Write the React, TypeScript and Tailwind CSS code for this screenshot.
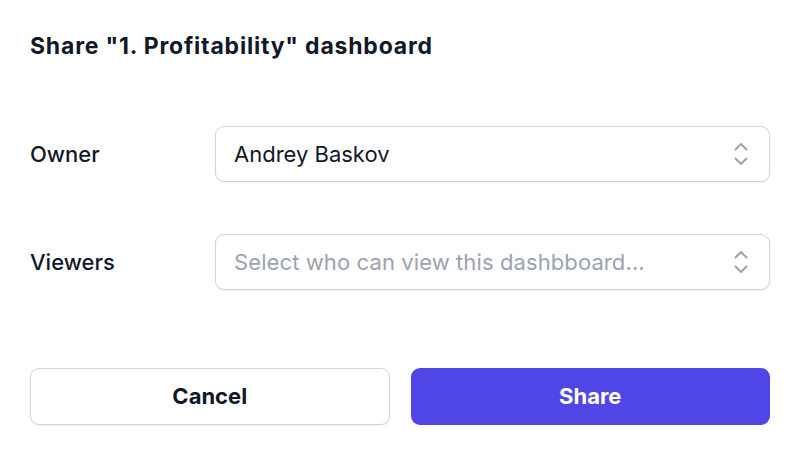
import React from "react";

function UpDown() {
  return (
    <svg width="16" height="26" viewBox="0 0 16 26" fill="none" stroke="#9ca3af" strokeWidth="2" strokeLinecap="round" strokeLinejoin="round">
      <path d="M2.5 8.5 L8 3 L13.5 8.5" />
      <path d="M2.5 17.5 L8 23 L13.5 17.5" />
    </svg>
  );
}

function Select({ value, placeholder }: { value?: string; placeholder?: string }) {
  return (
    <div className="flex h-[56px] items-center justify-between rounded-[9px] border border-[#d1d5db] bg-white pl-[18px] pr-[20px] shadow-[0_1px_2px_rgba(0,0,0,0.06)]">
      <span className={value ? "text-[22px] text-[#111827]" : "text-[22px] tracking-[0.1px] text-[#9ca3af]"}>
        {value ?? placeholder}
      </span>
      <UpDown />
    </div>
  );
}

export default function App() {
  return (
    <div
      className="min-h-[456px] w-[798px] bg-white pl-[30px] pr-[28px] pt-[32px]"
      style={{ fontFamily: "Inter, 'Liberation Sans', sans-serif" }}
    >
      <h1 className="text-[23px] font-bold leading-[28px] tracking-[0.8px] text-[#111827]">
        Share "1. Profitability" dashboard
      </h1>
      <div className="mt-[66px] grid grid-cols-[185px_1fr] items-center gap-y-[52px]">
        <div className="text-[22px] font-medium text-[#111827]">Owner</div>
        <Select value="Andrey Baskov" />
        <div className="text-[22px] font-medium text-[#111827]">Viewers</div>
        <Select placeholder="Select who can view this dashbboard..." />
      </div>
      <div className="mt-[78px] grid grid-cols-2 gap-[21px]">
        <button className="h-[57px] rounded-[9px] border border-[#d1d5db] bg-white text-[22px] font-bold text-[#111827] shadow-[0_1px_2px_rgba(0,0,0,0.06)]">
          Cancel
        </button>
        <button className="h-[57px] rounded-[9px] bg-[#4f46e5] text-[22px] font-bold text-white">
          Share
        </button>
      </div>
    </div>
  );
}
